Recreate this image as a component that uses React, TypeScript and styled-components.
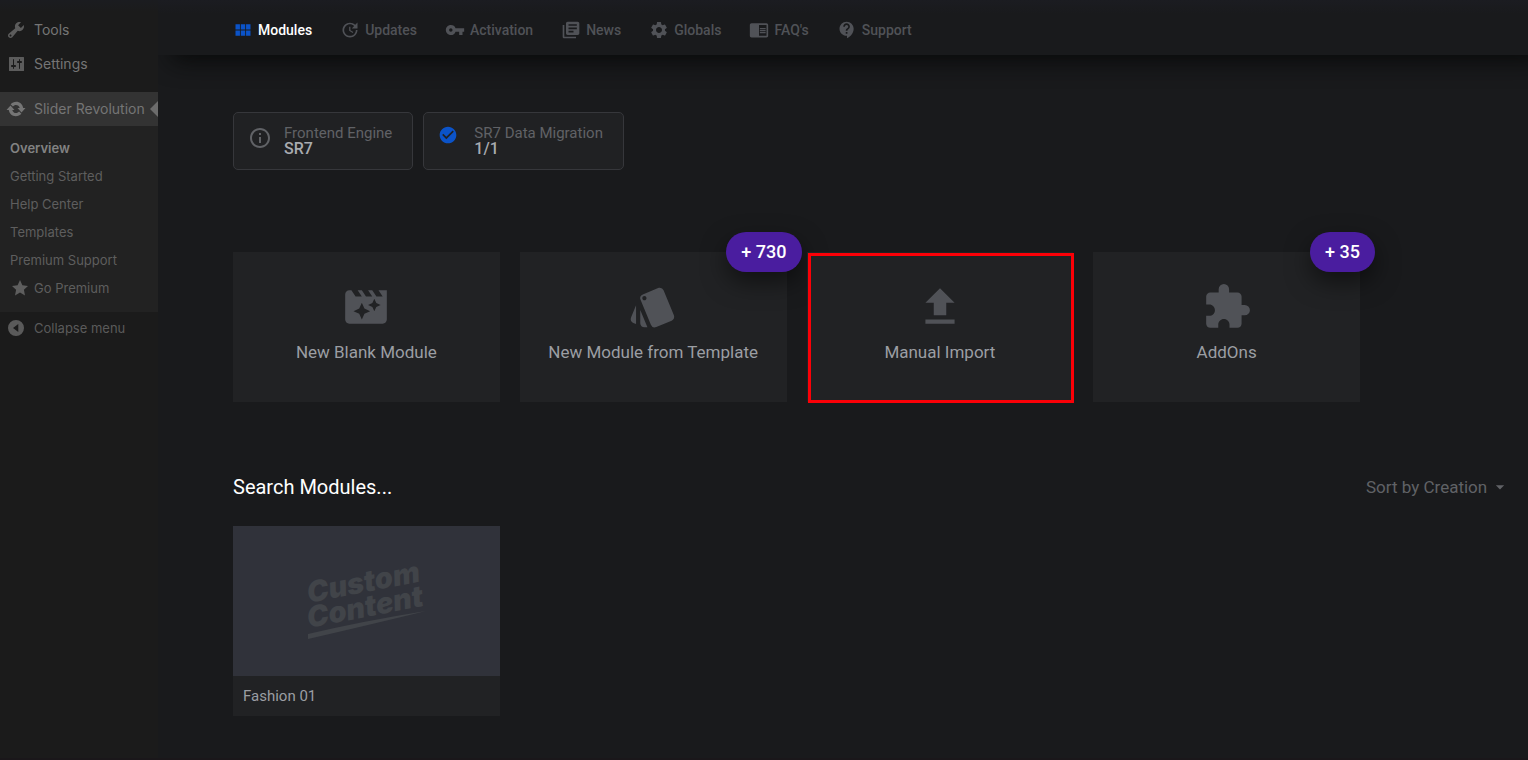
import React from 'react';
import styled, { createGlobalStyle } from 'styled-components';
import {
  MdViewModule, MdUpdate, MdVpnKey, MdLibraryBooks, MdSettings, MdChromeReaderMode,
  MdContactSupport, MdInfoOutline, MdCheckCircle, MdMovieFilter, MdStyle, MdFileUpload,
  MdExtension, MdArrowDropDown,
} from 'react-icons/md';

const GlobalStyle = createGlobalStyle`
  *, *::before, *::after { box-sizing: border-box; }
  body {
    margin: 0;
    background: #191a1c;
    font-family: Roboto, "Liberation Sans", sans-serif;
  }
  a { color: inherit; text-decoration: none; }
  button, input, select { font-family: inherit; margin: 0; }
`;

const Page = styled.div`
  display: flex;
  min-height: 100vh;
  border-bottom: 2px solid #1a171a;
`;

const Sidebar = styled.nav`
  flex: none;
  width: 158px;
  padding-top: 13px;
  background: linear-gradient(#1b1c20, #1b1b1b 12px);
  color: #757575;
  font-family: Inter, "Liberation Sans", sans-serif;
  font-size: 14px;
`;

const MenuLink = styled.a<{ $active?: boolean }>`
  position: relative;
  display: flex;
  align-items: center;
  gap: 8px;
  height: 34px;
  margin-top: ${p => (p.$active ? 11 : 0)}px;
  padding: 0 0 1px 6px;
  background: ${p => (p.$active ? '#333333' : 'transparent')};
  white-space: nowrap;
  svg { flex: none; width: 20px; height: 20px; fill: ${p => (p.$active ? '#757575' : '#5c5c5c')}; }
  &::after {
    content: '';
    display: ${p => (p.$active ? 'block' : 'none')};
    position: absolute;
    right: 0;
    top: 9px;
    border: 8px solid transparent;
    border-left: 0;
    border-right-color: #6c6c6c;
  }
`;

const Submenu = styled.ul`
  margin: 0;
  padding: 8px 0 10px;
  list-style: none;
  background: #222222;
  color: #5e5e5e;
  font-size: 13px;
`;

const SubLink = styled.a<{ $current?: boolean }>`
  display: flex;
  align-items: center;
  gap: 4px;
  height: 28px;
  padding-left: 10px;
  color: ${p => (p.$current ? '#828282' : 'inherit')};
  font-weight: ${p => (p.$current ? 600 : 400)};
  svg { width: 20px; height: 20px; fill: currentColor; }
`;

const Collapse = styled.button`
  display: flex;
  align-items: center;
  gap: 8px;
  width: 100%;
  height: 32px;
  padding: 0 0 0 6px;
  border: 0;
  background: none;
  color: #5a5a5a;
  font-size: 13px;
  svg { width: 20px; height: 20px; fill: #5a5a5a; }
`;

const Main = styled.main`
  flex: 1;
  min-width: 0;
  overflow: hidden;
`;

const Header = styled.header`
  display: flex;
  align-items: center;
  gap: 28px;
  height: 55px;
  padding: 5px 0 0 75px;
  background: linear-gradient(#1b1c21, #191a1c 14px);
  box-shadow: 14px 5px 25px 0 #080909;
`;

const Tab = styled.a<{ $active?: boolean }>`
  display: flex;
  align-items: center;
  gap: 5px;
  color: ${p => (p.$active ? '#ffffff' : '#505257')};
  font-size: 14px;
  font-weight: 500;
  white-space: nowrap;
  svg { width: 20px; height: 20px; color: ${p => (p.$active ? '#0b53c8' : '#505257')}; }
`;

const Content = styled.div`
  padding: 57px 18px 40px 75px;
`;

const Chips = styled.div`
  display: flex;
  gap: 10px;
`;

const Chip = styled.section`
  display: flex;
  gap: 12px;
  height: 58px;
  padding: 12px 20px 0 14px;
  border: 1px solid #36373b;
  border-radius: 5px;
  background: #202123;
`;

const ChipIcon = styled.span<{ $done?: boolean }>`
  width: 24px;
  height: 26px;
  display: flex;
  align-items: ${p => (p.$done ? 'flex-start' : 'center')};
  color: ${p => (p.$done ? '#0b53c8' : '#606266')};
  font-size: ${p => (p.$done ? 20 : 24)}px;
`;

const ChipText = styled.p`
  margin: 0;
  color: #606266;
  font-size: 15px;
  line-height: 16px;
  strong { display: block; color: #a8abb0; font-size: 16px; font-weight: 500; line-height: 15px; }
`;

const Cards = styled.div`
  display: grid;
  grid-template-columns: repeat(4, 1fr);
  gap: 20px;
  max-width: 1127px;
  margin-top: 82px;
`;

const Card = styled.button<{ $marked?: boolean }>`
  position: relative;
  display: flex;
  flex-direction: column;
  align-items: center;
  gap: 10px;
  height: 150px;
  padding: 30px 0 0;
  border: 0;
  background: #212224;
  color: #9b9ea3;
  font-size: 17px;
  line-height: 20px;
  svg { width: 50px; height: 50px; color: #505257; }
  &::after {
    content: '';
    display: ${p => (p.$marked ? 'block' : 'none')};
    position: absolute;
    inset: 1px -1px -1px 1px;
    border: 3px solid #fb0007;
  }
`;

const Badge = styled.span`
  position: absolute;
  top: -20px;
  right: -15px;
  padding: 0 15px;
  border-radius: 20px;
  background: #4a1d9f;
  box-shadow: 0 10px 25px rgba(0, 0, 0, 0.5);
  color: #ffffff;
  font-size: 18px;
  font-weight: 500;
  line-height: 40px;
`;

const Toolbar = styled.div`
  display: flex;
  align-items: center;
  justify-content: space-between;
  height: 40px;
  margin: 65px 0 19px;
`;

const Search = styled.input`
  width: 300px;
  padding: 0;
  border: 0;
  outline: 0;
  background: none;
  color: #ffffff;
  font-size: 20px;
  &::placeholder { color: #ffffff; opacity: 1; }
`;

const Sort = styled.label`
  display: flex;
  align-items: center;
  gap: 2px;
  color: #606266;
  font-size: 17px;
  select {
    appearance: none;
    padding: 0;
    border: 0;
    background: none;
    color: inherit;
    font-size: inherit;
  }
  svg { width: 20px; height: 20px; }
`;

const Module = styled.article`
  width: 267px;
  background: #212224;
`;

const Thumb = styled.div`
  height: 150px;
  background: #30323a;
  svg { display: block; width: 100%; height: 100%; }
`;

const ModuleTitle = styled.h3`
  margin: 0;
  padding: 0 10px;
  color: #9b9ea3;
  font-size: 15px;
  font-weight: 400;
  line-height: 40px;
`;

const Dash = ({ d }: { d: string }) => (
  <svg viewBox="0 0 20 20" aria-hidden="true"><path fillRule="evenodd" d={d} /></svg>
);

const dash = {
  tools: 'M16.68 9.77a4.543 4.543 0 0 1-4.95.99l-5.41 6.52c-.99.99-2.59.99-3.58 0s-.99-2.59 0-3.57l6.52-5.42c-.68-1.65-.35-3.61.99-4.95 1.28-1.28 3.12-1.62 4.72-1.06l-2.89 2.89 2.82 2.82 2.86-2.87c.53 1.58.18 3.39-1.08 4.65zM3.81 16.21c.4.39 1.04.39 1.43 0 .4-.4.4-1.04 0-1.43-.39-.4-1.03-.4-1.43 0a1.02 1.02 0 0 0 0 1.43z',
  settings: 'M18 16.500v-13q0-.5-.5-.5h-14q-.5 0-.5.5v13q0 .5.5.5h14q.5 0 .5-.5zM8 11h1c.55 0 1 .45 1 1s-.45 1-1 1H8v1.5c0 .28-.22.5-.5.5s-.5-.22-.5-.5V13H6c-.55 0-1-.45-1-1s.45-1 1-1h1V5.5c0-.28.22-.5.5-.5s.5.22.5.5V11zm6-2h-1v5.500c0 .28.22.5.5.5s.5-.22.5-.5V9h1c.55 0 1-.45 1-1s-.45-1-1-1h-1V5.500c0-.28-.22-.5-.5-.5s-.5.22-.5.5V7h-1c-.55 0-1 .45-1 1s.45 1 1 1z',
  update: 'M10.200 2.800c3.700 0 6.500 2.700 7 6.200h2.300l-4 4.600-4-4.600h2.200c-.45-1.900-1.900-3.100-3.700-3.100-1.300 0-2.300.6-3.100 1.500L4.600 5.200C6 3.700 8 2.800 10.200 2.800zm-.4 14.400c-3.700 0-6.500-2.700-7-6.200H.5l4-4.600 4 4.600H6.300c.45 1.900 1.900 3.100 3.700 3.100 1.300 0 2.300-.6 3.100-1.500l2.300 2.200c-1.400 1.500-3.400 2.400-5.600 2.400z',
  star: 'M10 2l2.4 5.3 5.6.7-4.1 3.8 1.1 5.7-5-2.9-5 2.9 1.1-5.7L2 8l5.600-.7z',
  collapse: 'M10 2a8 8 0 1 0 0 16 8 8 0 0 0 0-16zM12.300 6v8L7 10z',
};

const tabs = [
  { label: 'Modules', Icon: MdViewModule },
  { label: 'Updates', Icon: MdUpdate },
  { label: 'Activation', Icon: MdVpnKey },
  { label: 'News', Icon: MdLibraryBooks },
  { label: 'Globals', Icon: MdSettings },
  { label: "FAQ's", Icon: MdChromeReaderMode },
  { label: 'Support', Icon: MdContactSupport },
];

const cards = [
  { label: 'New Blank Module', Icon: MdMovieFilter },
  { label: 'New Module from Template', Icon: MdStyle, badge: '+ 730' },
  { label: 'Manual Import', Icon: MdFileUpload, marked: true },
  { label: 'AddOns', Icon: MdExtension, badge: '+ 35' },
];

const subItems = ['Overview', 'Getting Started', 'Help Center', 'Templates', 'Premium Support'];

export default function App() {
  return (
    <>
      <GlobalStyle />
      <Page>
        <Sidebar aria-label="Admin menu">
          <MenuLink href="#tools"><Dash d={dash.tools} />Tools</MenuLink>
          <MenuLink href="#settings"><Dash d={dash.settings} />Settings</MenuLink>
          <MenuLink href="#slider" $active><Dash d={dash.update} />Slider Revolution</MenuLink>
          <Submenu>
            {subItems.map((item, i) => (
              <li key={item}><SubLink href="#sub" $current={i === 0}>{item}</SubLink></li>
            ))}
            <li><SubLink href="#premium"><Dash d={dash.star} />Go Premium</SubLink></li>
          </Submenu>
          <Collapse type="button"><Dash d={dash.collapse} />Collapse menu</Collapse>
        </Sidebar>
        <Main>
          <Header>
            {tabs.map(({ label, Icon }, i) => (
              <Tab key={label} href="#tab" $active={i === 0}><Icon />{label}</Tab>
            ))}
          </Header>
          <Content>
            <Chips>
              <Chip>
                <ChipIcon><MdInfoOutline /></ChipIcon>
                <ChipText>Frontend Engine<strong>SR7</strong></ChipText>
              </Chip>
              <Chip>
                <ChipIcon $done><MdCheckCircle /></ChipIcon>
                <ChipText>SR7 Data Migration<strong>1/1</strong></ChipText>
              </Chip>
            </Chips>
            <Cards>
              {cards.map(({ label, Icon, badge, marked }) => (
                <Card key={label} type="button" $marked={marked}>
                  <Icon />
                  {label}
                  {badge && <Badge>{badge}</Badge>}
                </Card>
              ))}
            </Cards>
            <Toolbar>
              <Search type="text" placeholder="Search Modules..." aria-label="Search modules" />
              <Sort>
                <select aria-label="Sort modules"><option>Sort by Creation</option></select>
                <MdArrowDropDown />
              </Sort>
            </Toolbar>
            <Module>
              <Thumb>
                <svg viewBox="0 0 267 150" fill="#414449" role="img" aria-label="Custom Content">
                  <g fontFamily="Inter, sans-serif" fontWeight="900" fontStyle="italic" fontSize="29">
                    <text transform="translate(76 77) rotate(-11)">Custom</text>
                    <text transform="translate(76 102) rotate(-11)">Content</text>
                  </g>
                  <path d="M75 108Q130 95 193 85Q140 98 75 113Z" />
                </svg>
              </Thumb>
              <ModuleTitle>Fashion 01</ModuleTitle>
            </Module>
          </Content>
        </Main>
      </Page>
    </>
  );
}
